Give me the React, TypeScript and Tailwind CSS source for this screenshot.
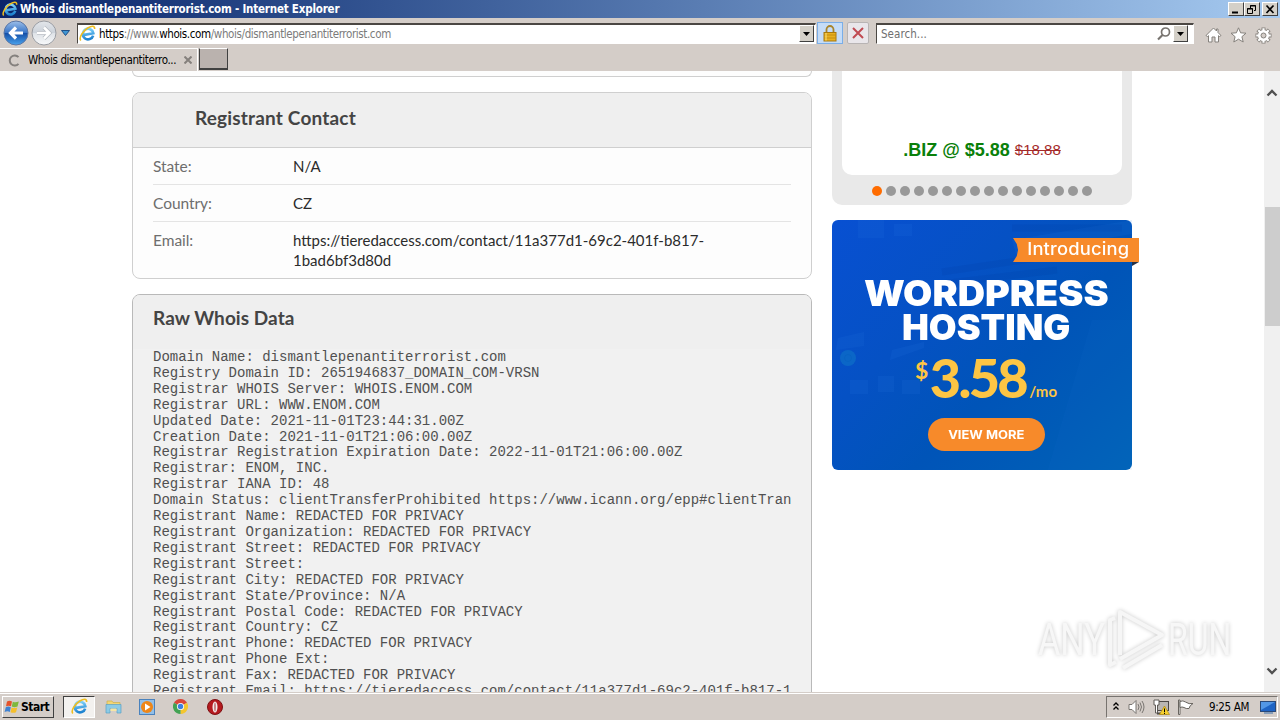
import React, { useId } from "react";

const RAW = [
  "Domain Name: dismantlepenantiterrorist.com",
  "Registry Domain ID: 2651946837_DOMAIN_COM-VRSN",
  "Registrar WHOIS Server: WHOIS.ENOM.COM",
  "Registrar URL: WWW.ENOM.COM",
  "Updated Date: 2021-11-01T23:44:31.00Z",
  "Creation Date: 2021-11-01T21:06:00.00Z",
  "Registrar Registration Expiration Date: 2022-11-01T21:06:00.00Z",
  "Registrar: ENOM, INC.",
  "Registrar IANA ID: 48",
  "Domain Status: clientTransferProhibited https://www.icann.org/epp#clientTran",
  "Registrant Name: REDACTED FOR PRIVACY",
  "Registrant Organization: REDACTED FOR PRIVACY",
  "Registrant Street: REDACTED FOR PRIVACY",
  "Registrant Street:",
  "Registrant City: REDACTED FOR PRIVACY",
  "Registrant State/Province: N/A",
  "Registrant Postal Code: REDACTED FOR PRIVACY",
  "Registrant Country: CZ",
  "Registrant Phone: REDACTED FOR PRIVACY",
  "Registrant Phone Ext:",
  "Registrant Fax: REDACTED FOR PRIVACY",
  "Registrant Email: https://tieredaccess.com/contact/11a377d1-69c2-401f-b817-1",
];

const UI = "font-['DejaVu_Sans_Condensed','DejaVu_Sans',sans-serif] font-stretch-condensed";

function IELogo({ size }: { size: number }) {
  const id = useId();
  return (
    <svg width={size} height={size} viewBox="0 0 18 18" className="shrink-0">
      <defs>
        <linearGradient id={id} x1="0" y1="0" x2="0" y2="1">
          <stop offset="0" stopColor="#7fd3fa" />
          <stop offset="1" stopColor="#1d82d0" />
        </linearGradient>
      </defs>
      <path d="M14.6 12.1A5.6 5.6 0 1 1 15.2 9.7H5.2" fill="none" stroke={`url(#${id})`} strokeWidth="2.8" transform="rotate(-10 9.500 9.500)" />
      <path d="M1.9 16.4C-.4 13.6 4 6.500 9.300 3.200C13.200.8 16.900.3 16.500 4.200" fill="none" stroke="#eebd20" strokeWidth="1.7" />
    </svg>
  );
}

function NavButton({ back }: { back?: boolean }) {
  return (
    <svg width="26" height="26" viewBox="0 0 26 26" className="shrink-0">
      <defs>
        <linearGradient id={back ? "nb" : "nf"} x1="0" y1="0" x2="0" y2="1">
          <stop offset="0" stopColor={back ? "#9dbfe9" : "#e3e6ea"} />
          <stop offset=".48" stopColor={back ? "#3a76c8" : "#ccd2da"} />
          <stop offset=".52" stopColor={back ? "#1650a8" : "#dfe3e8"} />
          <stop offset="1" stopColor={back ? "#4aa4ee" : "#f8f9fa"} />
        </linearGradient>
      </defs>
      <circle cx="13" cy="13" r="12" fill={back ? "url(#nb)" : "url(#nf)"} stroke={back ? "#5b76a4" : "#9a9da3"} />
      <path
        d={back ? "M20 13H8M13 7.500L7.500 13L13 18.500" : "M6 13H18M13 7.500L18.500 13L13 18.500"}
        fill="none"
        stroke={back ? "#fff" : "#b4b9c0"}
        strokeWidth={back ? "3.200" : "4"}
      />
      {!back && <path d="M6 13H18M13 7.500L18.500 13L13 18.500" fill="none" stroke="#fff" strokeWidth="2.600" />}
    </svg>
  );
}

function DropArrow() {
  return (
    <div className="flex h-[17px] w-[15px] shrink-0 items-center justify-center border border-t-white border-l-white border-r-[#404040] border-b-[#404040] bg-[#d4d0c8]">
      <svg width="7" height="4" viewBox="0 0 7 4"><path d="M0 0H7L3.500 4Z" fill="#000" /></svg>
    </div>
  );
}

function CaptionButton({ children }: { children: React.ReactNode }) {
  return (
    <div className="flex h-[14px] w-[16px] items-center justify-center border border-t-white border-l-white border-r-[#404040] border-b-[#404040] bg-[#d4d0c8]">
      <svg width="12" height="11" viewBox="0 0 12 11" fill="none" stroke="#000">{children}</svg>
    </div>
  );
}

function TitleBar() {
  return (
    <div className={`flex h-[18px] items-center bg-linear-to-r from-[#0a246a] to-[#a6caf0] pl-0.5 pr-0.5 ${UI}`}>
      <IELogo size={16} />
      <span className="ml-0.5 w-[322px] whitespace-nowrap pt-px text-[11.500px] font-bold leading-[17px] tracking-[-0.200px] text-white">
        Whois dismantlepenantiterrorist.com - Internet Explorer
      </span>
      <div className="ml-auto flex">
        <CaptionButton><path d="M2 8.500H8" strokeWidth="2" /></CaptionButton>
        <CaptionButton><path d="M4.500 4V1.500H9.500V6.500H8M4 2H10M1.500 4.500H6.500V9.500H1.500ZM1 5H7" /></CaptionButton>
        <div className="ml-0.5"><CaptionButton><path d="M2.500 1.500L9.500 9M9.500 1.500L2.500 9" strokeWidth="1.700" /></CaptionButton></div>
      </div>
    </div>
  );
}

function Toolbar() {
  return (
    <div className={`flex h-[30px] items-center bg-[#d4cdc8] pl-[3px] pr-[8px] ${UI}`}>
      <NavButton back />
      <div className="ml-[2px] flex"><NavButton /></div>
      <svg width="9" height="6" viewBox="0 0 9 6" className="ml-[4px]"><path d="M.5.5H8.500L4.500 5.500Z" fill="#3f96d4" stroke="#1e4f86" /></svg>
      <div className="ml-[7px] flex h-[21px] w-[739px] items-center border border-t-2 border-t-[#4b4743] border-l-[#4b4743] border-r-white border-b-white bg-white pl-px pr-px">
        <IELogo size={17} />
        <span className="ml-[3px] whitespace-nowrap pt-[2px] text-[11.500px] leading-[15px] tracking-[-0.380px] text-[#7b7b7b]">
          <span className="text-black">https</span>://www.<span className="text-black">whois.com</span>/whois/dismantlepenantiterrorist.com
        </span>
        <div className="ml-auto"><DropArrow /></div>
      </div>
      <div className="ml-px flex h-[22px] w-[26px] items-center justify-center border border-[#7aaee8] bg-[#c5dcf7]">
        <svg width="14" height="17" viewBox="0 0 14 17">
          <path d="M3.500 8V4.500A3.500 3.500 0 0 1 10.500 4.500V8" fill="none" stroke="#a8842c" strokeWidth="1.800" />
          <rect x="1" y="7.500" width="12" height="8.500" fill="#e8b020" stroke="#a8780f" />
          <path d="M1 10H13M1 13H13" stroke="#c48e10" />
          <path d="M3 8V15.500" stroke="#fbe27a" />
        </svg>
      </div>
      <div className="ml-1 flex h-[22px] w-[22px] items-center justify-center rounded-[2px] border border-[#b8b4b4] bg-[#e9e6ea]">
        <svg width="12" height="12" viewBox="0 0 12 12"><path d="M1 1L11 11M11 1L1 11" stroke="#c04a52" strokeWidth="2" /></svg>
      </div>
      <div className="ml-[7px] flex h-[21px] w-[318px] items-center border border-t-2 border-t-[#4b4743] border-l-[#4b4743] border-r-white border-b-white bg-white pl-1 pr-[5px]">
        <span className="pt-[2px] text-[11.500px] leading-[15px] tracking-[0.050px] text-[#6f6f6f]">Search...</span>
        <svg width="14" height="14" viewBox="0 0 14 14" className="ml-auto mr-0.5"><circle cx="8.500" cy="5" r="4" fill="none" stroke="#77736f" strokeWidth="1.700" /><path d="M5.500 8L1 12.500" stroke="#77736f" strokeWidth="2.200" /></svg>
        <DropArrow />
      </div>
      <div className="ml-auto flex items-center gap-[8px] pt-[4px]">
        <svg width="17" height="16" viewBox="0 0 17 16" fill="#fff" stroke="#85817c"><path d="M8.500 1L1 8.500L2.500 9.500L3.500 8.700V15H7V10H10V15H13.500V8.700L14.500 9.500L16 8.500L13 5.500V2H11.500V4Z" /></svg>
        <svg width="17" height="16" viewBox="0 0 17 16" fill="#fff" stroke="#85817c"><path d="M8.500.8L10.600 5.800L16 6.200L11.900 9.700L13.200 15L8.500 12.200L3.800 15L5.100 9.700L1 6.200L6.400 5.800Z" /></svg>
        <svg width="17" height="17" viewBox="0 0 17 17">
          <g stroke="#85817c" strokeWidth="4"><path d="M8.500.5V16.500M.5 8.500H16.500M2.800 2.800L14.200 14.200M14.200 2.800L2.800 14.200" /></g>
          <circle cx="8.500" cy="8.500" r="6.200" fill="#85817c" />
          <g stroke="#fff" strokeWidth="2.200"><path d="M8.500 1.200V15.800M1.200 8.500H15.800M3.300 3.300L13.700 13.700M13.700 3.300L3.300 13.700" /></g>
          <circle cx="8.500" cy="8.500" r="5.500" fill="#fff" />
          <circle cx="8.500" cy="8.500" r="2.500" fill="#d4cdc8" stroke="#85817c" />
        </svg>
      </div>
    </div>
  );
}

function TabStrip() {
  return (
    <div className={`flex h-[23px] bg-[#d4cdc8] ${UI}`}>
      <div className="flex w-[198px] items-center border-t border-r border-white pl-2">
        <svg width="13" height="13" viewBox="0 0 13 13" className="shrink-0"><path d="M10.500 3.200A5 5 0 1 0 10.500 9.800" fill="none" stroke="#85817e" strokeWidth="2" /></svg>
        <span className="ml-[7px] w-[150px] whitespace-nowrap pt-px text-[11.500px] leading-[15px] tracking-[-0.380px] text-black">Whois dismantlepenantiterro...</span>
        <svg width="8" height="8" viewBox="0 0 8 8" className="ml-[6px] shrink-0"><path d="M.5.5L7.500 7.500M7.500.5L.5 7.500" stroke="#85807c" strokeWidth="2" /></svg>
      </div>
      <div className="ml-px h-[22px] w-[29px] border border-b-2 border-t-white border-l-[#404040] border-r-[#404040] border-b-[#404040] bg-[#bab2ae]" />
    </div>
  );
}

function ContactRow({ label, last, children }: { label: string; last?: boolean; children: React.ReactNode }) {
  return (
    <div className={last ? "flex pt-[8px]" : "flex h-[37px] border-b border-[#e4e4e4] pt-[8px]"}>
      <div className="w-[140px] text-[15.500px] tracking-[-0.050px] text-[#6e6e6e]">{label}</div>
      <div className="w-[440px] text-[#2b2b2b]">{children}</div>
    </div>
  );
}

function Promo() {
  return (
    <div className="relative mt-[15px] flex h-[250px] w-[300px] flex-col items-center rounded-[6px] bg-[linear-gradient(135deg,#0850d2_0%,#0551c4_35%,#0054b8_60%,#0063b6_100%)] pl-[8px] font-['Inter',sans-serif] text-white">
      <svg width="300" height="250" className="absolute left-0 top-0">
        <g fill="#2a78e4" opacity=".13">
          <path d="M26 0H52V18H26ZM62 4H80V16H62ZM6 118L32 112V126L4 130ZM18 160H36V174H18ZM46 156H62V172H46ZM70 160H88V174H70ZM60 130L92 122V128L58 140Z" />
          <path d="M180 20L300 0V14L184 34Z" /><path d="M216 250L260 100H300V250Z" opacity=".5" />
        </g>
        <g stroke="#00399b" strokeWidth="7" opacity=".13" fill="none"><path d="M110 52L205 38M108 64L225 50M180 8H290" /></g>
        <circle cx="16" cy="138" r="8" fill="#1387c8" opacity=".4" />
        <circle cx="16" cy="138" r="3.500" fill="none" stroke="#0761c0" opacity=".7" />
      </svg>
      <div className="absolute left-[181px] top-[18px] flex h-[24px] w-[126px] items-center justify-center bg-[#f78a2a] pl-1 [clip-path:polygon(0_0,100%_0,100%_100%,0_100%,3%_75%,4%_50%,3%_25%)]">
        <span className="origin-center scale-x-[1.080] text-[17px] font-medium tracking-[0.150px]">Introducing</span>
      </div>
      <svg width="7" height="4" viewBox="0 0 7 4" className="absolute left-[300px] top-[42px]"><path d="M0 0H7L0 4Z" fill="#263248" /></svg>
      <div className="relative mt-[56px] flex w-[290px] flex-col items-center text-[35px] font-black leading-[34px]">
        <span className="scale-x-[1.080]">WORDPRESS</span>
        <span className="scale-x-[1.025]">HOSTING</span>
      </div>
      <div className="relative mt-[6px] flex h-[56px] w-[142px] items-start font-['Lato',sans-serif] font-bold text-[#fdc544]">
        <span className="mt-[7px] w-[15px] text-[23px] leading-[26px]">$</span>
        <span className="w-[102px] text-[54px] font-black leading-[56px] tracking-[-2.600px]">3.58</span>
        <span className="mt-[31px] text-[15px] leading-[20px]">/mo</span>
      </div>
      <div className="relative mt-[12px] flex h-[33px] w-[117px] shrink-0 items-center justify-center rounded-full bg-[#f78a2a] text-[12px] font-bold">
        <span className="scale-x-[1.080] whitespace-nowrap">VIEW MORE</span>
      </div>
    </div>
  );
}

function Watermark() {
  return (
    <div className="absolute left-[1038px] top-[608px] flex h-[64px] w-[198px] items-center justify-between drop-shadow-[0_0_2px_rgba(0,0,0,0.220)]">
      <span className="w-[66px] origin-left scale-x-[0.760] font-['Roboto',sans-serif] text-[45px] font-normal leading-[64px] text-[#f7f7f7]">ANY</span>
      <svg width="62" height="64" viewBox="0 0 62 64" className="absolute left-[68px] top-0" fill="none" stroke="#f6f6f6" strokeWidth="4" strokeLinejoin="round">
        <path d="M14 47V4L56 27L14 51M9 10L4 12V57L10 54M17 60L56 37" />
      </svg>
      <span className="w-[68px] origin-left scale-x-[0.710] font-['Roboto',sans-serif] text-[45px] font-normal leading-[64px] text-[#f7f7f7]">RUN</span>
    </div>
  );
}

function Chevron({ up }: { up?: boolean }) {
  return <svg width="12" height="8" viewBox="0 0 12 8"><path d={up ? "M1.500 6.500L6 2L10.500 6.500" : "M1.500 1.500L6 6L10.500 1.500"} fill="none" stroke="#505050" strokeWidth="2.300" /></svg>;
}

function Taskbar() {
  return (
    <div className={`flex h-[28px] items-center border-t border-[#d4cdc8] bg-[#d4cdc8] shadow-[inset_0_1px_0_#fff] ${UI}`}>
      <div className="ml-0.5 flex h-[22px] w-[52px] items-center border border-t-white border-l-white border-r-[#404040] border-b-[#404040] pl-px">
        <svg width="16" height="16" viewBox="0 0 16 16">
          <path d="M3 2.500Q5.500 1 8 2.500L7 7.300Q4.500 6 2 7.300Z" fill="#e5532b" />
          <path d="M8.800 2.800Q11.500 4 14.800 2.500L13.500 7.500Q10.500 8.700 7.800 7.600Z" fill="#7eb83c" />
          <path d="M1.800 8.200Q4.300 7 6.800 8.200L5.800 13Q3.500 11.700.6 13Z" fill="#3f82d2" />
          <path d="M7.600 8.500Q10.500 9.600 13.300 8.400L12 13.300Q9.500 14.400 6.500 13.300Z" fill="#f5bf2c" />
        </svg>
        <span className="ml-px text-[12px] font-bold tracking-[-0.500px] text-black">Start</span>
      </div>
      <div className="ml-[9px] flex h-[22px] w-[32px] items-center justify-center border border-t-[#404040] border-l-[#404040] border-r-white border-b-white bg-[#f3f1ef]"><IELogo size={17} /></div>
      <svg width="17" height="17" viewBox="0 0 17 17" className="ml-[10px]">
        <path d="M2 3H7L8 4.500H15V8H2Z" fill="#f2d675" stroke="#cfb04c" strokeWidth=".7" />
        <path d="M1 6.500H16V15H12V10.500H5V15H1Z" fill="#8ccbe6" stroke="#5aa1c4" strokeWidth=".7" />
        <path d="M5.500 10.500H11.500V13H5.500Z" fill="#f6e6a4" />
      </svg>
      <svg width="16" height="16" viewBox="0 0 16 16" className="ml-[17px]"><rect x=".5" y=".5" width="15" height="15" fill="#92bfe8" stroke="#4a82bd" /><circle cx="8" cy="8" r="6" fill="#ee8618" /><path d="M6 4.500L11.500 8L6 11.500Z" fill="#fff" /></svg>
      <svg width="15" height="15" viewBox="0 0 16 16" className="ml-[18px]">
        <path d="M8 8L1.070 4A8 8 0 0 1 14.930 4Z" fill="#d9473a" /><path d="M8 8L14.930 4A8 8 0 0 1 8 16Z" fill="#f4c62e" /><path d="M8 8L8 16A8 8 0 0 1 1.070 4Z" fill="#43a253" />
        <circle cx="8" cy="8" r="3.800" fill="#fff" /><circle cx="8" cy="8" r="2.900" fill="#3d80df" />
      </svg>
      <svg width="16" height="16" viewBox="0 0 16 16" className="ml-[19px]"><circle cx="8" cy="8" r="7.500" fill="#b51a1f" stroke="#7e1013" /><ellipse cx="8" cy="8" rx="2.500" ry="5.500" fill="#f4eaea" /><ellipse cx="8" cy="8" rx=".7" ry="4.500" fill="#b05a5c" /></svg>
      <div className="ml-auto mr-0.5 flex h-[22px] w-[172px] items-center border border-t-[#77736f] border-l-[#77736f] border-r-white border-b-white pl-[6px] pr-0">
        <svg width="6" height="9" viewBox="0 0 6 9" fill="none" stroke="#000" strokeWidth="1.300"><path d="M.5 3.500L3 1L5.500 3.500M.5 7.500L3 5L5.500 7.500" /></svg>
        <svg width="17" height="16" viewBox="0 0 17 16" className="ml-[9px]" fill="none" stroke="#797571"><path d="M1 5.500H4L8 1.500V14.500L4 10.500H1Z" fill="#fff" /><path d="M10 5Q12 8 10 11M12 3.500Q15 8 12 12.500M14 2Q18 8 14 14" /></svg>
        <svg width="17" height="16" viewBox="0 0 17 16" className="ml-[8px]"><rect x="4.500" y="2.500" width="11" height="9" fill="#b9b6b3" stroke="#4c4946" /><path d="M4 14.500H14" stroke="#4c4946" strokeWidth="2" /><path d="M1 1H6V6H4.500V14H2.500V6H1Z" fill="#fff" stroke="#5f5b57" /><path d="M11.500 7L16.500 15.500H6.500Z" fill="#f7d02c" stroke="#b08a10" strokeWidth=".7" /><path d="M11.500 9.500V13M11.500 13.800V15" stroke="#000" /></svg>
        <svg width="17" height="16" viewBox="0 0 17 16" className="ml-[7px]" fill="#fff" stroke="#68645f"><path d="M1.500 1V15.500H3V1Z" /><path d="M3 2.500Q6 1 8.500 3Q12 5.500 16 4.500Q12.500 6.500 12 9.500Q9 10 7 8.500Q5 7.500 3 8.500Z" /></svg>
        <span className="ml-[15px] w-[41px] whitespace-nowrap pt-px text-[11.500px] leading-[15px] tracking-[-0.350px] text-black">9:25 AM</span>
        <svg width="17" height="16" viewBox="0 0 17 16" className="ml-auto"><rect x=".5" y="2.500" width="15" height="10" fill="#1f64c4" stroke="#2a4978" /><path d="M1 3H15L1 11Z" fill="#5397e5" /><path d="M4 14H13" stroke="#6d8db5" strokeWidth="1.500" /></svg>
      </div>
    </div>
  );
}

export default function App() {
  return (
    <div className="relative flex h-[720px] w-[1280px] flex-col overflow-hidden bg-white">
      <TitleBar />
      <Toolbar />
      <TabStrip />
      <main className="flex h-[621px] overflow-hidden bg-white">
        <div className="ml-[132px] w-[680px]">
          <div className="h-[6px] rounded-b-[8px] border border-t-0 border-[#cfcfcf] bg-[#fdfdfd]" />
          <section className="mt-[15px] h-[187px] overflow-hidden rounded-[8px] border border-[#cfcfcf] bg-[#fdfdfd] font-['Lato',sans-serif] text-[15px] leading-[20px]">
            <h2 className="h-[55px] border-b border-[#cfcfcf] bg-[#efefef] pl-[62px] pt-[13px] text-[19px] font-bold leading-[24px] tracking-[0.180px] text-[#444]">Registrant Contact</h2>
            <div className="px-5">
              <ContactRow label="State:">N/A</ContactRow>
              <ContactRow label="Country:">CZ</ContactRow>
              <ContactRow label="Email:" last>https://tieredaccess.com/contact/11a377d1-69c2-401f-b817-<br />1bad6bf3d80d</ContactRow>
            </div>
          </section>
          <section className="mt-[15px] h-[420px] overflow-hidden rounded-t-[8px] border border-[#b9b9b9] bg-[#f1f1f1]">
            <h2 className="h-[54px] bg-[#efefef] px-5 pt-[11px] font-['Lato',sans-serif] text-[19px] font-bold leading-[24px] tracking-[0.060px] text-[#444]">Raw Whois Data</h2>
            <pre className="mx-5 overflow-hidden pt-px font-['Liberation_Mono',monospace] text-[14px] leading-[15.900px] text-[#505050]">{RAW.join("\n")}</pre>
          </section>
        </div>
        <aside className="ml-5 w-[300px]">
          <div className="flex h-[134px] flex-col rounded-b-[10px] bg-[#e9e9e9] px-[10px]">
            <div className="flex h-[104px] items-end justify-center gap-[5px] rounded-b-[10px] bg-white pb-[13px] font-['Liberation_Sans',sans-serif] leading-[24px]">
              <span className="text-[18px] font-bold text-[#0a800a]">.BIZ @ $5.88</span>
              <span className="text-[15px] text-[#a52a2a] line-through">$18.88</span>
            </div>
            <div className="mt-[11px] flex justify-center gap-1">
              {Array.from({ length: 16 }, (_, i) => (
                <span key={i} className={i === 0 ? "size-[10px] rounded-full bg-[#ff6c00]" : "size-[10px] rounded-full bg-[#999]"} />
              ))}
            </div>
          </div>
          <Promo />
        </aside>
        <div className="ml-auto flex w-[16px] flex-col items-center bg-[#f0f0f0] pt-[18px] pb-[17px]">
          <Chevron up />
          <div className="mt-[110px] h-[119px] w-[15px] bg-[#cdcdcd]" />
          <div className="mt-auto flex"><Chevron /></div>
        </div>
      </main>
      <Taskbar />
      <Watermark />
    </div>
  );
}
